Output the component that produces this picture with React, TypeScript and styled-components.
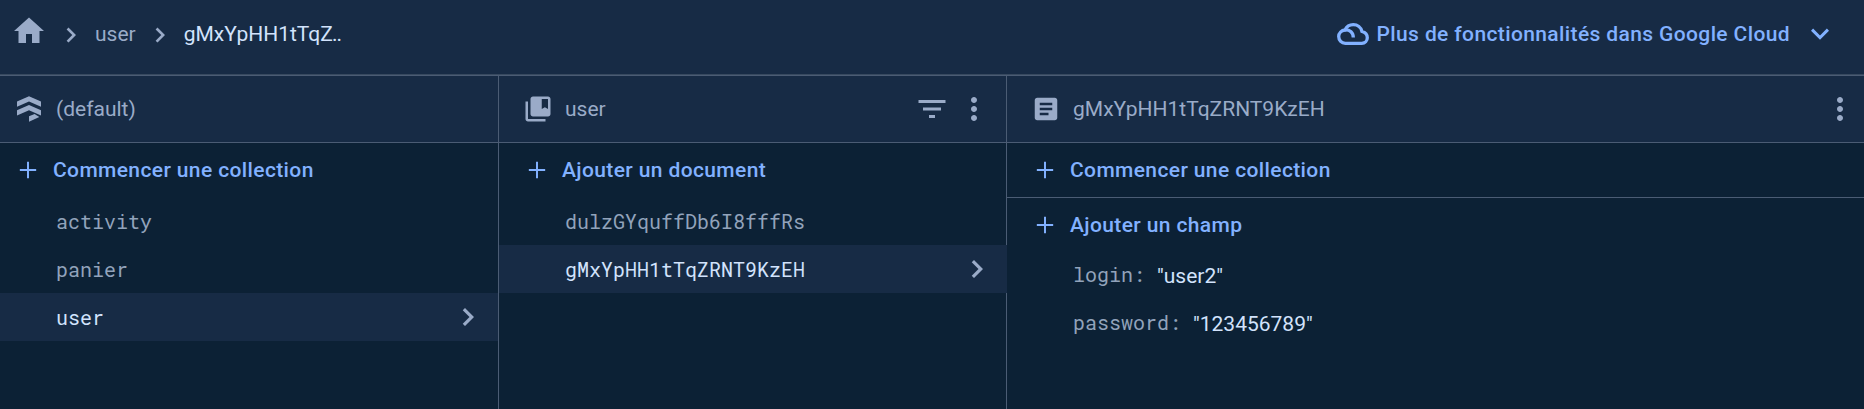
import React from 'react';
import styled, { createGlobalStyle, css } from 'styled-components';

const c = {
  bar: '#172b45',
  bg: '#0c2135',
  line: '#4b5c74',
  lineSoft: '#37495f',
  muted: '#9aabc8',
  mono: '#92a3bb',
  blue: '#82b1ff',
  light: '#d2e3fc',
};

const GlobalStyle = createGlobalStyle`
  * { box-sizing: border-box; }
  body { margin: 0; background: ${c.bg}; font-family: Roboto, sans-serif; }
`;

const Page = styled.div`
  height: 409px;
  display: flex;
  flex-direction: column;
  overflow: hidden;
  background: ${c.bg};
  font-size: 21px;
  line-height: 30px;
  white-space: nowrap;
`;

const TopBar = styled.header`
  height: 76px;
  flex: none;
  display: flex;
  justify-content: space-between;
  padding: 0 26px 0 11px;
  background: ${c.bar};
  border-bottom: 1px solid ${c.line};
  box-shadow: inset 0 -1px ${c.lineSoft};
`;

const Breadcrumbs = styled.nav`
  display: flex;
  align-items: center;
  height: 68px;
  color: ${c.muted};
`;

const Crumb = styled.span<{ $current?: boolean }>`
  color: ${(p) => (p.$current ? c.light : c.muted)};
`;

const Dots = styled.span`
  margin-left: -1px;
  letter-spacing: -1px;
`;

const buttonText = css`
  color: ${c.blue};
  font: 500 21px Roboto, sans-serif;
  letter-spacing: 0.38px;
`;

const CloudButton = styled.button`
  display: flex;
  align-items: center;
  height: 68px;
  padding: 0;
  border: 0;
  background: none;
  ${buttonText}
`;

const CloudLabel = styled.span`
  margin: 0 12px 0 8px;
`;

const Columns = styled.main`
  flex: 1;
  display: grid;
  grid-template-columns: 499px 508px 1fr;
`;

const Column = styled.section`
  display: flex;
  flex-direction: column;
  background: ${c.bg};
`;

const ColumnHeader = styled.div<{ $pad: number; $end?: number; $divider?: boolean }>`
  height: 67px;
  display: flex;
  align-items: center;
  padding: 0 ${(p) => p.$end ?? 0}px 0 ${(p) => p.$pad}px;
  background: ${c.bar};
  border-bottom: 1px solid ${c.line};
  color: ${c.muted};
  ${(p) => p.$divider && css`border-right: 1px solid ${c.line};`}
`;

const Title = styled.span`
  flex: 1;
  margin-left: 12px;
`;

const Body = styled.div<{ $divider?: boolean }>`
  flex: 1;
  ${(p) => p.$divider && css`box-shadow: inset -1px 0 ${c.line};`}
`;

const AddButton = styled.button<{ $pad: number; $underline?: boolean }>`
  display: flex;
  align-items: center;
  gap: 11px;
  width: 100%;
  height: ${(p) => (p.$underline ? 55 : 54)}px;
  padding: 0 0 0 ${(p) => p.$pad}px;
  border: 0;
  border-bottom: ${(p) => (p.$underline ? `1px solid ${c.line}` : '0')};
  background: none;
  ${buttonText}
`;

const Row = styled.div<{ $pad: number; $selected?: boolean; $inset?: boolean }>`
  height: 48px;
  display: flex;
  align-items: center;
  justify-content: space-between;
  padding: 0 12px 0 ${(p) => p.$pad}px;
  margin-right: ${(p) => (p.$inset ? 1 : 0)}px;
  background: ${(p) => (p.$selected ? c.bar : 'transparent')};
  color: ${(p) => (p.$selected ? c.light : c.mono)};
  font-family: 'Roboto Mono', 'DejaVu Sans Mono', monospace;
  font-size: 20px;
`;

const Field = styled.div`
  height: 48px;
  display: flex;
  align-items: center;
  padding-left: 66px;
`;

const FieldKey = styled.span`
  color: ${c.mono};
  font-family: 'Roboto Mono', 'DejaVu Sans Mono', monospace;
  font-size: 20px;
  margin: 0 12px 4px 0;
`;

const FieldValue = styled.span`
  color: ${c.light};
  margin-bottom: 1px;
`;

const Glyph = styled.svg<{ $ml?: number; $mr?: number; $mt?: number; $mb?: number }>`
  flex: none;
  display: block;
  margin: ${(p) => `${p.$mt ?? 0}px ${p.$mr ?? 0}px ${p.$mb ?? 0}px ${p.$ml ?? 0}px`};
`;

type IconProps = {
  d: string;
  size?: number;
  grid?: number;
  fill?: string;
  $ml?: number;
  $mr?: number;
  $mt?: number;
  $mb?: number;
};
const Icon = ({ d, size = 30, grid = 24, fill = c.muted, ...rest }: IconProps) => (
  <Glyph width={size} height={size} viewBox={`0 0 ${grid} ${grid}`} fill={fill} {...rest}>
    <path d={d} />
  </Glyph>
);

const paths = {
  home: 'M10 20v-6h4v6h5v-8h3L12 3 2 12h3v8z',
  right: 'M10 6L8.500 7.500 13 12l-4.500 4.500L10 18l6-6z',
  down: 'M7.41 8.400L12 13l4.590-4.600L18 9.800l-6 6-6-6z',
  plus: 'M19 12.850h-6.150V19h-1.700v-6.150H5v-1.700h6.150V5h1.700v6.150H19z',
  collection:
    'M4 6H2v14c0 1.100.9 2 2 2h14v-2H4V6zm16-4H8c-1.100 0-2 .9-2 2v12c0 1.100.9 2 2 2h12c1.100 0 2-.9 2-2V4c0-1.100-.9-2-2-2zm0 10l-2.500-1.500L15 12V4h5v8z',
  filter: 'M10 18h4v-2h-4v2zM3 6v2h18V6H3zm3 7h12v-2H6v2z',
  more: 'M12 8c1.100 0 2-.9 2-2s-.9-2-2-2-2 .9-2 2 .9 2 2 2zm0 2c-1.100 0-2 .9-2 2s.9 2 2 2 2-.9 2-2-.9-2-2-2zm0 6c-1.100 0-2 .9-2 2s.9 2 2 2 2-.9 2-2-.9-2-2-2z',
  doc: 'M19 3H5c-1.100 0-2 .9-2 2v14c0 1.100.9 2 2 2h14c1.100 0 2-.9 2-2V5c0-1.100-.9-2-2-2zm-5 14H7v-2h7v2zm3-4H7v-2h10v2zm0-4H7V7h10v2z',
  database:
    'M15 2.200L3 7.500v5.300l12-5.300 12 5.300V7.500zM15 11L3 16.300v5.200l12-5.200 12 5.200v-5.200zM15 22.300v5.400l10.300-4.800-4.700-2.900z',
};

const CloudIcon = () => (
  <Glyph width={32} height={32} viewBox="0 0 32 32" fill="none" stroke={c.blue} strokeWidth="3.3">
    <path d="M25 13.500C24 9.300 20.500 6.700 16.300 6.700C12.500 6.700 9.500 8.800 8 12C4.500 12.300 1.700 15 1.700 18.500C1.700 22.300 4.700 25.300 8.300 25.300H24.800C28 25.300 30.300 22.700 30.300 19.800C30.300 16.500 28 14.200 25 13.500Z" />
    <path d="M8 11.800C13 11.600 16.300 14.500 16.300 19.500" />
  </Glyph>
);

export default function App() {
  return (
    <>
      <GlobalStyle />
      <Page>
        <TopBar>
          <Breadcrumbs>
            <Icon d={paths.home} size={36} $mb={6} />
            <Icon d={paths.right} $ml={9} $mr={9} $mt={2} />
            <Crumb>user</Crumb>
            <Icon d={paths.right} $ml={9} $mr={9} $mt={2} />
            <Crumb $current>
              gMxYpHH1tTqZ<Dots>..</Dots>
            </Crumb>
          </Breadcrumbs>
          <CloudButton>
            <CloudIcon />
            <CloudLabel>Plus de fonctionnalités dans Google Cloud</CloudLabel>
            <Icon d={paths.down} size={36} fill={c.blue} />
          </CloudButton>
        </TopBar>
        <Columns>
          <Column>
            <ColumnHeader $pad={14} $divider>
              <Icon d={paths.database} grid={30} />
              <Title>(default)</Title>
            </ColumnHeader>
            <Body $divider>
              <AddButton $pad={14}>
                <Icon d={paths.plus} size={28} fill={c.blue} />
                Commencer une collection
              </AddButton>
              <Row $pad={56}>activity</Row>
              <Row $pad={56}>panier</Row>
              <Row $pad={56} $selected $inset>
                user
                <Icon d={paths.right} size={36} />
              </Row>
            </Body>
          </Column>
          <Column>
            <ColumnHeader $pad={24} $end={14} $divider>
              <Icon d={paths.collection} />
              <Title>user</Title>
              <Icon d={paths.filter} size={36} $mr={6} />
              <Icon d={paths.more} size={36} />
            </ColumnHeader>
            <Body $divider>
              <AddButton $pad={24}>
                <Icon d={paths.plus} size={28} fill={c.blue} />
                Ajouter un document
              </AddButton>
              <Row $pad={66}>dulzGYquffDb6I8fffRs</Row>
              <Row $pad={66} $selected>
                gMxYpHH1tTqZRNT9KzEH
                <Icon d={paths.right} size={36} />
              </Row>
            </Body>
          </Column>
          <Column>
            <ColumnHeader $pad={24} $end={6}>
              <Icon d={paths.doc} />
              <Title>gMxYpHH1tTqZRNT9KzEH</Title>
              <Icon d={paths.more} size={36} />
            </ColumnHeader>
            <Body>
              <AddButton $pad={24} $underline>
                <Icon d={paths.plus} size={28} fill={c.blue} />
                Commencer une collection
              </AddButton>
              <AddButton $pad={24}>
                <Icon d={paths.plus} size={28} fill={c.blue} />
                Ajouter un champ
              </AddButton>
              <Field>
                <FieldKey>login:</FieldKey>
                <FieldValue>"user2"</FieldValue>
              </Field>
              <Field>
                <FieldKey>password:</FieldKey>
                <FieldValue>"123456789"</FieldValue>
              </Field>
            </Body>
          </Column>
        </Columns>
      </Page>
    </>
  );
}
